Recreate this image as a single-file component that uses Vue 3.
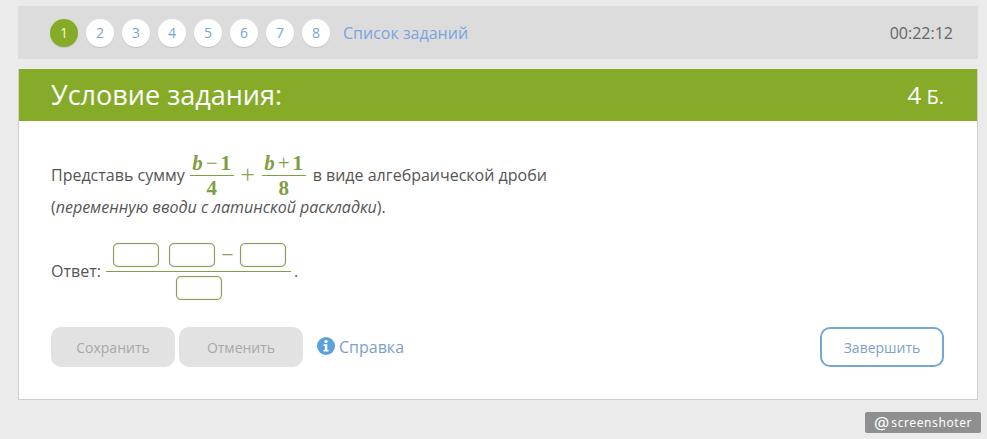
<script setup>
const steps = [1, 2, 3, 4, 5, 6, 7, 8]
</script>

<template>
  <div class="page">
    <div class="topbar">
      <div class="steps">
        <span v-for="s in steps" :key="s" class="step" :class="{ active: s === 1 }">{{ s }}</span>
        <a class="list">Список заданий</a>
      </div>
      <span class="timer">00:22:12</span>
    </div>
    <section class="card">
      <header class="head">
        <h1>Условие задания:</h1>
        <span class="points"><span class="pn">4</span> Б.</span>
      </header>
      <div class="body">
        <div class="line first">
          <span>Представь сумму</span>
          <span class="frac">
            <span class="num"><i>b</i><span class="op">−</span>1</span>
            <span class="den">4</span>
          </span>
          <span class="plus">+</span>
          <span class="frac">
            <span class="num"><i>b</i><span class="op">+</span>1</span>
            <span class="den">8</span>
          </span>
          <span class="rest">в виде алгебраической дроби</span>
        </div>
        <p class="hint">(<em>переменную вводи с латинской раскладки</em>).</p>
        <div class="line answer">
          <span class="alabel">Ответ:</span>
          <span class="afrac">
            <span class="atop">
              <span class="box"></span>
              <span class="box second"></span>
              <span class="minus">−</span>
              <span class="box"></span>
            </span>
            <span class="abot"><span class="box"></span></span>
          </span>
          <span class="dot">.</span>
        </div>
        <div class="actions">
          <button class="btn off">Сохранить</button>
          <button class="btn off">Отменить</button>
          <a class="help">
            <svg class="info" width="18" height="18" viewBox="0 0 18 18">
              <circle cx="9" cy="9" r="9" fill="#5b9fdc" />
              <circle cx="9" cy="4.6" r="1.7" fill="#fff" />
              <path d="M6.6 7.3h3.7v5.6h1.3v1.6H6.5v-1.6h1.4V8.9H6.6z" fill="#fff" />
            </svg>
            Справка
          </a>
          <button class="btn finish">Завершить</button>
        </div>
      </div>
    </section>
    <div class="badge"><span class="at">@</span>screenshoter</div>
  </div>
</template>

<style>
html, body { margin: 0; background: #ebebeb; }
</style>

<style scoped>
.page {
  position: relative;
  box-sizing: border-box;
  width: 987px;
  height: 439px;
  padding: 6px 9px 0 18px;
  overflow: hidden;
  background: #ebebeb;
  font-family: "Open Sans", "Liberation Sans", sans-serif;
  font-size: 16px;
  color: #555;
}
.topbar {
  display: flex;
  align-items: center;
  justify-content: space-between;
  height: 53px;
  padding: 0 25px 0 32px;
  background: #dcdcdc;
}
.steps { display: flex; align-items: center; gap: 8px; }
.step {
  display: flex;
  align-items: center;
  justify-content: center;
  width: 28px;
  height: 28px;
  border-radius: 50%;
  background: #fff;
  color: #7ba6cc;
  font-size: 14px;
  box-shadow: 0 1px 1px rgba(0, 0, 0, 0.12);
}
.step.active { background: #85ab29; color: #f2f8c8; }
.list { margin-left: 5px; color: #7ba4dc; font-size: 16px; }
.timer { color: #666; font-size: 16px; }
.card {
  margin-top: 10px;
  height: 331px;
  box-sizing: border-box;
  border: 1px solid #cfcfcf;
  border-top: 0;
  background: #fff;
}
.head {
  display: flex;
  align-items: center;
  justify-content: space-between;
  height: 52px;
  padding: 0 33px 2px 32px;
  box-sizing: border-box;
  background: #85ab29;
  color: #fff;
}
h1 { margin: 0; font-size: 27px; font-weight: 400; }
.points { font-size: 20px; }
.pn { font-size: 24px; }
.body { padding: 30px 33px 0 32px; }
.line { display: flex; align-items: center; white-space: nowrap; }
.first { height: 48px; }
.frac {
  display: inline-flex;
  flex-direction: column;
  align-items: center;
  margin-left: 5px;
  font-family: "Liberation Serif", serif;
  font-weight: 700;
  font-size: 21px;
  line-height: 22px;
  color: #7f9f45;
}
.num {
  display: flex;
  justify-content: center;
  box-sizing: border-box;
  width: 44px;
  padding-bottom: 1px;
  border-bottom: 1px solid #7f9f45;
}
.op { font-weight: 400; margin: 0 3px; }
.den { padding-top: 1px; }
.plus {
  width: 28px;
  text-align: center;
  font-family: "Liberation Serif", serif;
  font-size: 26px;
  color: #8aa65a;
}
.plus + .frac { margin-left: 0; }
.rest { margin-left: 7px; }
.hint { margin: 0; height: 16px; line-height: 16px; }
.answer { margin-top: 28px; }
.alabel { padding-bottom: 2px; }
.afrac {
  display: inline-flex;
  flex-direction: column;
  align-items: center;
  margin-left: 5px;
}
.atop {
  display: flex;
  align-items: center;
  justify-content: center;
  box-sizing: border-box;
  width: 185px;
  padding: 0 0 4px 2px;
  border-bottom: 1px solid #7f9f45;
}
.second { margin-left: 10px; }
.minus {
  width: 25px;
  text-align: center;
  font-family: "Liberation Serif", serif;
  font-size: 22px;
  line-height: 24px;
  color: #8aa65a;
}
.abot { padding: 4px 0 0 2px; display: flex; }
.box {
  display: block;
  box-sizing: border-box;
  width: 46px;
  height: 24px;
  border: 1px solid #8a9f55;
  border-radius: 5px;
  background: #fff;
  box-shadow: 0 0 1px rgba(120, 140, 60, 0.6), inset 0 0 3px rgba(0, 0, 0, 0.14);
}
.dot { margin-left: 3px; padding-bottom: 2px; }
.actions { display: flex; align-items: center; margin-top: 27px; }
.btn {
  box-sizing: border-box;
  width: 124px;
  height: 40px;
  border: 0;
  border-radius: 10px;
  font-family: inherit;
  font-size: 14px;
}
.off { background: #e2e2e2; color: #a8a8a8; margin-right: 4px; }
.help {
  display: flex;
  align-items: center;
  gap: 4px;
  margin-left: 10px;
  font-size: 16px;
  color: #7ba0cc;
}
.info { position: relative; top: -1px; }
.finish {
  margin-left: auto;
  border: 2px solid #74a8d4;
  background: #fff;
  color: #7ba3cc;
}
.badge {
  position: absolute;
  left: 865px;
  top: 412px;
  display: flex;
  align-items: center;
  width: 116px;
  height: 21px;
  box-sizing: border-box;
  padding-left: 9px;
  border-radius: 2px;
  background: #8f8f8f;
  color: #fff;
  font-family: "Noto Sans", sans-serif;
  font-size: 12px;
  letter-spacing: 0.6px;
}
.at { font-size: 17px; line-height: 21px; margin-right: 2px; letter-spacing: 0; }
</style>
